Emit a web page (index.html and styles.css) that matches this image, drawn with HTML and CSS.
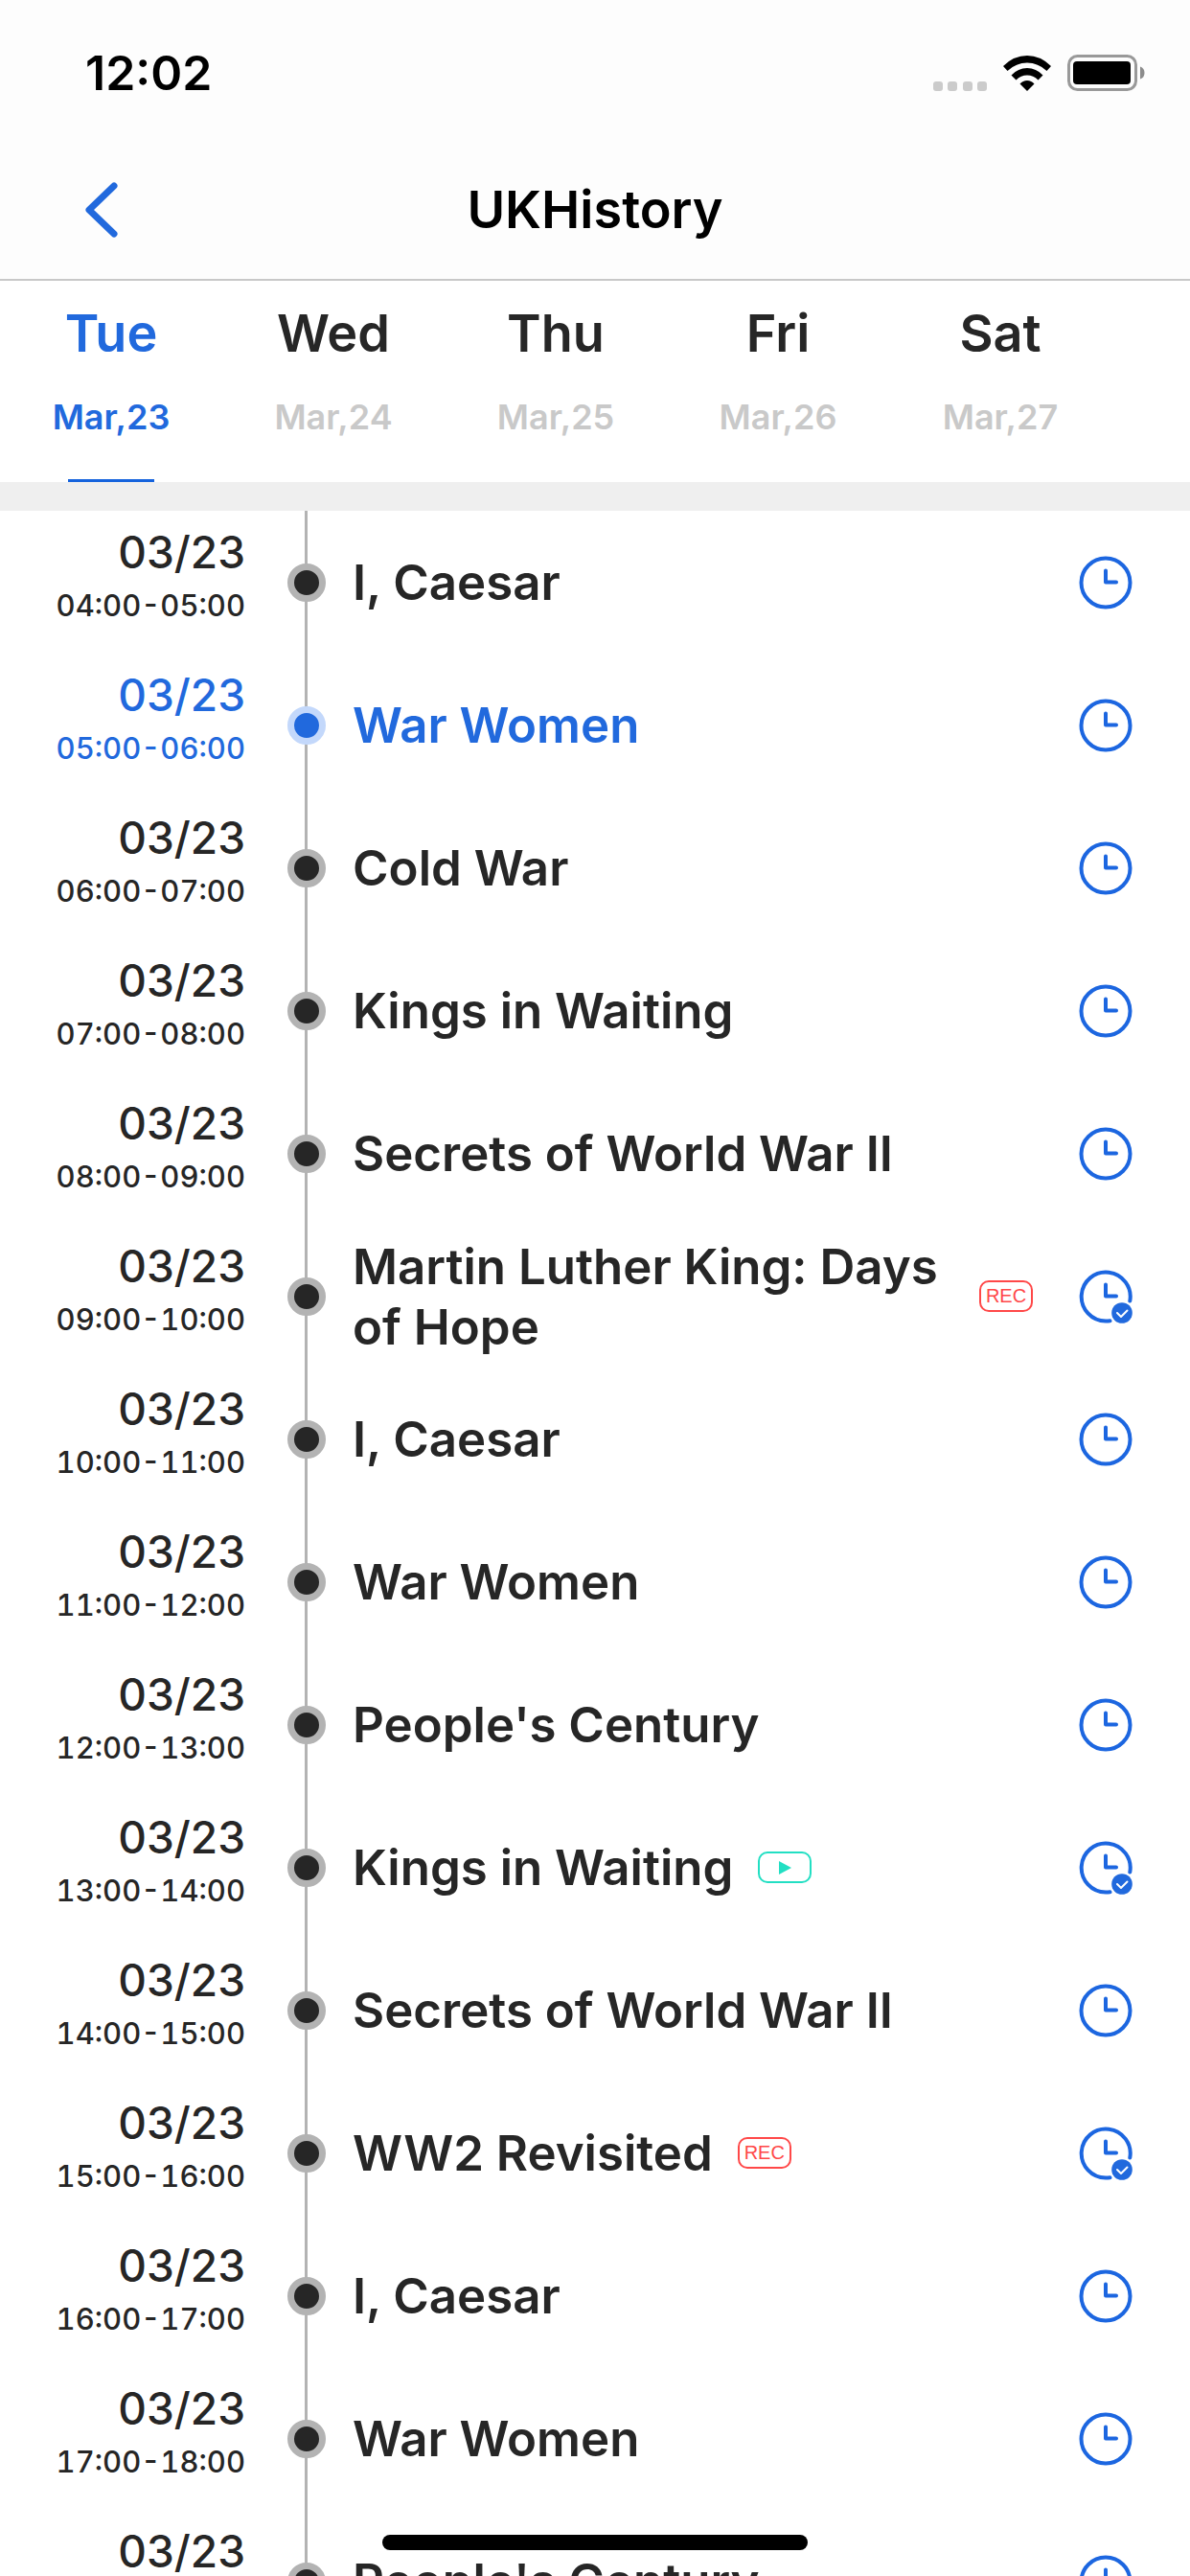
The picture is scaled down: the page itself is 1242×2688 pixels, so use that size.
FILE: index.html
```html
<!DOCTYPE html>
<html lang="en">
<head>
  <meta charset="UTF-8">
  <meta name="viewport" content="width=device-width, initial-scale=1.0">
  <title>UKHistory</title>
  <link rel="stylesheet" href="styles.css">
</head>
<body>

  <!-- shared icons -->
  <svg class="sprite" aria-hidden="true">
    <symbol id="clock" viewBox="0 0 56 56">
      <circle cx="28" cy="28" r="25.5" />
      <path d="M28 15.5V27.5H39" />
    </symbol>
    <symbol id="clock-set" viewBox="0 0 56 56">
      <path d="M53.3 32.5A25.5 25.5 0 1 0 28 53.5Q30.5 53.5 32.5 53.2" />
      <path d="M28 15.5V27.5H39" />
      <circle class="fill" cx="45" cy="45" r="10.8" />
      <path class="tick" d="M40 45L44 49L50.5 42.5" />
    </symbol>
  </svg>

  <div class="app">
    <header class="header">
      <div class="status">
        <span>12:02</span>
        <div class="status-icons">
          <svg width="56" height="10" viewBox="0 0 56 10" class="signal" aria-hidden="true">
            <rect width="10" height="10" rx="3" />
            <rect x="15" width="10" height="10" rx="3" />
            <rect x="31" width="10" height="10" rx="3" />
            <rect x="46" width="10" height="10" rx="3" />
          </svg>
          <svg width="50" height="37" viewBox="0 0 50 37" aria-hidden="true">
            <path d="M0 11Q11 0 25 0Q39 0 50 11L45.500 16Q36.500 7.500 25 7.500Q13.500 7.500 4.500 16Z" />
            <path d="M8.500 20.500Q15.500 13 25 13Q34.500 13 41.500 20.500L36.500 25.500Q31.500 20.500 25 20.500Q18.500 20.500 13.500 25.500Z" />
            <path d="M17.500 29.500Q20.500 26 25 26Q29.500 26 32.500 29.500L25 37Z" />
          </svg>
          <svg width="82" height="38" viewBox="0 0 82 38" aria-hidden="true">
            <rect x="1.500" y="1.500" width="70" height="35" rx="9" class="battery-case" />
            <rect x="6" y="7" width="60" height="24" rx="4" />
            <path d="M76 12.500Q80.500 14 80.500 19Q80.500 24 76 25.500Z" class="battery-tip" />
          </svg>
        </div>
      </div>
      <div class="nav">
        <button class="back" aria-label="Back">
          <svg width="36" height="58" viewBox="0 0 36 58" aria-hidden="true"><path d="M31 4L5 29L31 54" /></svg>
        </button>
        <h1>UKHistory</h1>
      </div>
    </header>

    <nav class="days">
      <button class="day active"><span class="day-name">Tue</span><span class="day-date">Mar,23</span></button>
      <button class="day"><span class="day-name">Wed</span><span class="day-date">Mar,24</span></button>
      <button class="day"><span class="day-name">Thu</span><span class="day-date">Mar,25</span></button>
      <button class="day"><span class="day-name">Fri</span><span class="day-date">Mar,26</span></button>
      <button class="day"><span class="day-name">Sat</span><span class="day-date">Mar,27</span></button>
    </nav>

    <ul class="schedule">
      <li class="show">
        <div class="when"><span class="date">03/23</span><span class="time">04:00-05:00</span></div>
        <span class="dot"></span>
        <h2>I, Caesar</h2>
        <button class="remind" aria-label="Set reminder"><svg><use href="#clock" /></svg></button>
      </li>
      <li class="show current">
        <div class="when"><span class="date">03/23</span><span class="time">05:00-06:00</span></div>
        <span class="dot"></span>
        <h2>War Women</h2>
        <button class="remind" aria-label="Set reminder"><svg><use href="#clock" /></svg></button>
      </li>
      <li class="show">
        <div class="when"><span class="date">03/23</span><span class="time">06:00-07:00</span></div>
        <span class="dot"></span>
        <h2>Cold War</h2>
        <button class="remind" aria-label="Set reminder"><svg><use href="#clock" /></svg></button>
      </li>
      <li class="show">
        <div class="when"><span class="date">03/23</span><span class="time">07:00-08:00</span></div>
        <span class="dot"></span>
        <h2>Kings in Waiting</h2>
        <button class="remind" aria-label="Set reminder"><svg><use href="#clock" /></svg></button>
      </li>
      <li class="show">
        <div class="when"><span class="date">03/23</span><span class="time">08:00-09:00</span></div>
        <span class="dot"></span>
        <h2>Secrets of World War II</h2>
        <button class="remind" aria-label="Set reminder"><svg><use href="#clock" /></svg></button>
      </li>
      <li class="show">
        <div class="when"><span class="date">03/23</span><span class="time">09:00-10:00</span></div>
        <span class="dot"></span>
        <h2>Martin Luther King: Days of Hope</h2>
        <span class="badge rec">REC</span>
        <button class="remind" aria-label="Remove reminder"><svg><use href="#clock-set" /></svg></button>
      </li>
      <li class="show">
        <div class="when"><span class="date">03/23</span><span class="time">10:00-11:00</span></div>
        <span class="dot"></span>
        <h2>I, Caesar</h2>
        <button class="remind" aria-label="Set reminder"><svg><use href="#clock" /></svg></button>
      </li>
      <li class="show">
        <div class="when"><span class="date">03/23</span><span class="time">11:00-12:00</span></div>
        <span class="dot"></span>
        <h2>War Women</h2>
        <button class="remind" aria-label="Set reminder"><svg><use href="#clock" /></svg></button>
      </li>
      <li class="show">
        <div class="when"><span class="date">03/23</span><span class="time">12:00-13:00</span></div>
        <span class="dot"></span>
        <h2>People's Century</h2>
        <button class="remind" aria-label="Set reminder"><svg><use href="#clock" /></svg></button>
      </li>
      <li class="show">
        <div class="when"><span class="date">03/23</span><span class="time">13:00-14:00</span></div>
        <span class="dot"></span>
        <h2>Kings in Waiting</h2>
        <span class="badge play"><svg width="14" height="14" viewBox="0 0 14 14" aria-hidden="true"><path d="M1 0L14 7L1 14Z" /></svg></span>
        <button class="remind" aria-label="Remove reminder"><svg><use href="#clock-set" /></svg></button>
      </li>
      <li class="show">
        <div class="when"><span class="date">03/23</span><span class="time">14:00-15:00</span></div>
        <span class="dot"></span>
        <h2>Secrets of World War II</h2>
        <button class="remind" aria-label="Set reminder"><svg><use href="#clock" /></svg></button>
      </li>
      <li class="show">
        <div class="when"><span class="date">03/23</span><span class="time">15:00-16:00</span></div>
        <span class="dot"></span>
        <h2>WW2 Revisited</h2>
        <span class="badge rec">REC</span>
        <button class="remind" aria-label="Remove reminder"><svg><use href="#clock-set" /></svg></button>
      </li>
      <li class="show">
        <div class="when"><span class="date">03/23</span><span class="time">16:00-17:00</span></div>
        <span class="dot"></span>
        <h2>I, Caesar</h2>
        <button class="remind" aria-label="Set reminder"><svg><use href="#clock" /></svg></button>
      </li>
      <li class="show">
        <div class="when"><span class="date">03/23</span><span class="time">17:00-18:00</span></div>
        <span class="dot"></span>
        <h2>War Women</h2>
        <button class="remind" aria-label="Set reminder"><svg><use href="#clock" /></svg></button>
      </li>
      <li class="show">
        <div class="when"><span class="date">03/23</span><span class="time">18:00-19:00</span></div>
        <span class="dot"></span>
        <h2>People's Century</h2>
        <button class="remind" aria-label="Set reminder"><svg><use href="#clock" /></svg></button>
      </li>
    </ul>
  </div>

  <div class="home-bar"></div>

</body>
</html>
```

FILE: styles.css
```css
* {
  box-sizing: border-box;
}
body {
  margin: 0;
  background: white;
  color: #262626;
  font-family: Inter, "Liberation Sans", sans-serif;
  font-weight: 600;
}
button {
  padding: 0;
  border: none;
  background: none;
  color: inherit;
  font: inherit;
  cursor: pointer;
}
svg {
  display: block;
}
.sprite {
  display: none;
}
.app {
  display: flex;
  flex-direction: column;
  height: 100vh;
}

/* header */
.header {
  padding-bottom: 6px;
  background: #fdfdfd;
  border-bottom: 2px solid #c8c8c8;
  color: black;
}
.status {
  display: flex;
  justify-content: space-between;
  align-items: center;
  height: 152px;
  padding: 0 46px 0 89px;
  font-size: 50px;
}
.status-icons {
  display: flex;
  align-items: flex-end;
  gap: 17px;
}
.signal {
  fill: #cbcbcb;
}
.battery-case {
  fill: none;
  stroke: #999;
  stroke-width: 3;
}
.battery-tip {
  fill: #8c8c8c;
}
.nav {
  display: grid;
  grid-template-columns: 124px 1fr 124px;
  align-items: center;
  height: 133px;
}
.back {
  justify-self: end;
}
.back path {
  fill: none;
  stroke: #2169dd;
  stroke-width: 7;
  stroke-linecap: round;
  stroke-linejoin: round;
}
h1 {
  margin: 0;
  font-size: 54px;
  font-weight: 600;
  text-align: center;
}

/* day tabs */
.days {
  display: flex;
  border-bottom: 30px solid #efefef;
}
.day {
  position: relative;
  width: 232px;
  padding: 22px 0 44px;
}
.day-name,
.day-date {
  display: block;
}
.day-name {
  font-size: 54px;
  line-height: 66px;
}
.day-date {
  margin-top: 30px;
  color: #c9c9c9;
  font-size: 36px;
  line-height: 48px;
}
.day.active,
.active .day-date {
  color: #2169dd;
}
.day.active::after {
  content: "";
  position: absolute;
  left: 50%;
  bottom: 0;
  width: 90px;
  height: 3px;
  margin-left: -45px;
  background: #1563dd;
}

/* schedule */
.schedule {
  flex: 1;
  margin: 0;
  padding: 0;
  overflow-y: auto;
  scrollbar-width: none;
  list-style: none;
}
.show {
  display: flex;
  align-items: center;
  min-height: 149px;
  padding-right: 60px;
  /* the timeline runs behind the dots */
  background: linear-gradient(#b3b3b3, #b3b3b3) 318px 0 / 3px 100% no-repeat;
}
.when {
  flex: none;
  width: 256px;
  padding-bottom: 15px;
  font-weight: 500;
  text-align: right;
}
.date,
.time {
  display: block;
}
.date {
  font-size: 46px;
  line-height: 64px;
}
.time {
  font-size: 31px;
  line-height: 48px;
  font-variant-numeric: tabular-nums;
}
.dot {
  flex: none;
  width: 40px;
  height: 40px;
  margin: 0 28px 0 44px;
  border: 7px solid #b3b3b3;
  border-radius: 50%;
  background: #262626;
}
h2 {
  max-width: 628px;
  margin: 0;
  font-size: 51px;
  font-weight: 600;
  line-height: 63px;
}
.current {
  color: #2169dd;
}
.current .dot {
  border-color: #c3d8fb;
  background: #2169dd;
}
.badge {
  display: flex;
  flex: none;
  justify-content: center;
  align-items: center;
  width: 56px;
  height: 33px;
  margin-left: 26px;
  border: 2px solid;
  border-radius: 10px;
}
.rec {
  color: #ff4848;
  font-family: "Liberation Sans", sans-serif;
  font-size: 20px;
  font-weight: 400;
}
.play {
  color: #22dfc3;
}
.play path {
  fill: #22dfc3;
}
.remind {
  flex: none;
  margin-left: auto;
}
.remind svg {
  width: 56px;
  height: 56px;
  fill: none;
  stroke: #1c66e0;
  stroke-width: 4;
  stroke-linecap: round;
  stroke-linejoin: round;
}
.fill {
  fill: #2169dd;
  stroke: none;
}
.tick {
  stroke: white;
  stroke-width: 2;
}

.home-bar {
  position: fixed;
  bottom: 27px;
  left: 50%;
  width: 444px;
  height: 16px;
  border-radius: 8px;
  background: black;
  transform: translateX(-50%);
}
```
